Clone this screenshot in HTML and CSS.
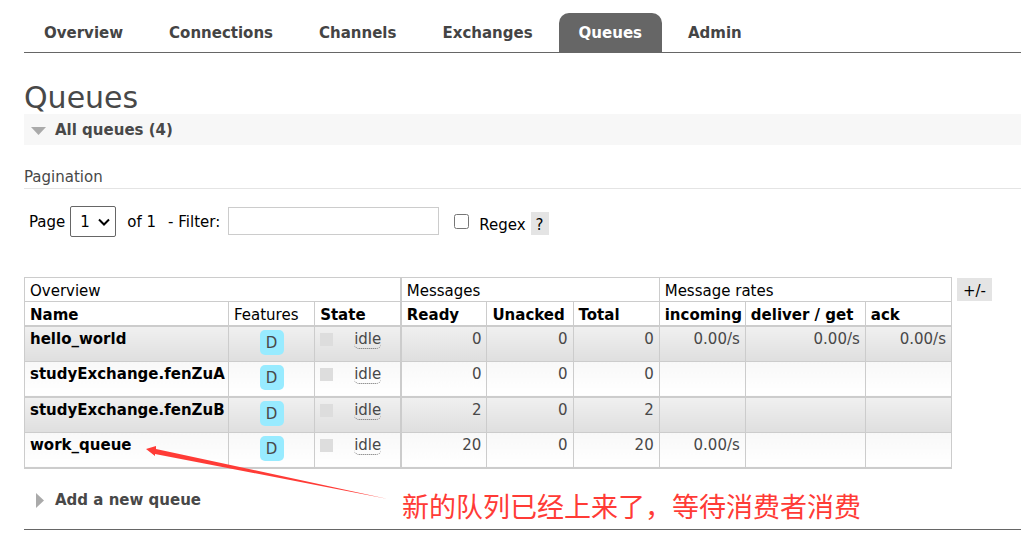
FILE: index.html
```html
<!DOCTYPE html>
<html lang="en">
<head>
<meta charset="utf-8">
<title>Queues</title>
<link rel="stylesheet" href="styles.css">
</head>
<body>
<nav class="tabs">
  <a href="#">Overview</a>
  <a href="#">Connections</a>
  <a href="#">Channels</a>
  <a href="#">Exchanges</a>
  <a href="#" class="selected">Queues</a>
  <a href="#">Admin</a>
</nav>
<main class="main">
  <h1>Queues</h1>
  <h2 class="section open"><svg class="arrow" viewBox="0 0 15 15"><path d="M0 4h15L7.500 12z"/></svg>All queues (4)</h2>
  <h3>Pagination</h3>
  <form class="filter">
    <label for="page">Page</label>
    <span class="select-box">
      <select id="page"><option>1</option></select>
      <svg class="chevron" viewBox="0 0 12 8"><path d="M1 1.500l5 5 5-5"/></svg>
    </span>
    <span class="of">of 1</span>
    <label class="filter-label" for="filter">- Filter:</label>
    <input type="text" id="filter" class="text">
    <input type="checkbox" id="regex" class="check">
    <label class="regex" for="regex">Regex</label>
    <button type="button" class="help">?</button>
  </form>
  <div class="listing">
    <table class="list">
      <colgroup>
        <col class="c-name"><col><col><col><col><col><col><col class="c-get"><col>
      </colgroup>
      <thead>
        <tr><th colspan="3" class="plain divide">Overview</th><th colspan="3" class="plain">Messages</th><th colspan="3" class="plain">Message rates</th></tr>
        <tr><th>Name</th><th class="plain">Features</th><th class="divide">State</th><th>Ready</th><th>Unacked</th><th>Total</th><th>incoming</th><th>deliver / get</th><th>ack</th></tr>
      </thead>
      <tbody>
        <tr><td><a href="#">hello_world</a></td><td class="c"><abbr class="feature">D</abbr></td><td class="divide"><div class="state"><i></i><abbr>idle</abbr></div></td><td class="r">0</td><td class="r">0</td><td class="r">0</td><td class="r">0.00/s</td><td class="r">0.00/s</td><td class="r">0.00/s</td></tr>
        <tr><td><a href="#">studyExchange.fenZuA</a></td><td class="c"><abbr class="feature">D</abbr></td><td class="divide"><div class="state"><i></i><abbr>idle</abbr></div></td><td class="r">0</td><td class="r">0</td><td class="r">0</td><td></td><td></td><td></td></tr>
        <tr><td><a href="#">studyExchange.fenZuB</a></td><td class="c"><abbr class="feature">D</abbr></td><td class="divide"><div class="state"><i></i><abbr>idle</abbr></div></td><td class="r">2</td><td class="r">0</td><td class="r">2</td><td></td><td></td><td></td></tr>
        <tr><td><a href="#">work_queue</a></td><td class="c"><abbr class="feature">D</abbr></td><td class="divide"><div class="state"><i></i><abbr>idle</abbr></div></td><td class="r">20</td><td class="r">0</td><td class="r">20</td><td class="r">0.00/s</td><td></td><td></td></tr>
      </tbody>
    </table>
    <button type="button" class="columns">+/-</button>
  </div>
  <h2 class="section"><svg class="arrow" viewBox="0 0 15 15"><path d="M5 0v15l8-7.500z"/></svg>Add a new queue</h2>
</main>
<svg class="pointer" viewBox="0 0 242 56"><path d="M0 3L10 0 10 3 242 53 9 8 9 10z"/></svg>
<p class="note" lang="zh-CN">新的队列已经上来了，等待消费者消费</p>
</body>
</html>
```
FILE: styles.css
```css
* { box-sizing: border-box; }
body {
  position: relative;
  margin: 0;
  padding: 13px 0 0 24px;
  background: #fff;
  color: #484848;
  font: 15px/20px Verdana, "DejaVu Sans", sans-serif;
  overflow: hidden;
}
button, input, select { font: inherit; }
.tabs {
  display: flex;
  gap: 6px;
  border-bottom: 1px solid #666;
}
.tabs a {
  padding: 10px 20px 9px;
  border-radius: 10px 10px 0 0;
  color: #444;
  font-weight: bold;
  text-decoration: none;
}
.tabs .selected { background: #666; color: #fff; }
.main { border-bottom: 1px solid #666; padding-bottom: 14px; }
h1 {
  margin: 28px 0 0;
  font-size: 30px;
  line-height: 33px;
  font-weight: normal;
}
.section {
  display: flex;
  align-items: center;
  gap: 9px;
  margin: 0;
  padding: 6px 7px 5px;
  font-size: 15px;
  line-height: 20px;
}
.open { background: #f7f7f7; }
.arrow { width: 15px; height: 15px; fill: #aaa; }
h3 {
  margin: 22px 0 17px;
  border-bottom: 1px solid #e4e4e4;
  font-size: 15px;
  line-height: 21px;
  font-weight: normal;
}
.filter {
  display: flex;
  align-items: center;
  padding-left: 5px;
  color: #000;
}
.select-box { position: relative; margin: 0 11px 0 5px; }
.select-box select {
  display: block;
  width: 46px;
  height: 31px;
  padding: 0 9px;
  appearance: none;
  border: 1px solid #666;
  border-radius: 2px;
  background: #fff;
  color: #000;
}
.chevron {
  position: absolute;
  right: 6px;
  top: 12px;
  width: 12px;
  height: 8px;
  fill: none;
  stroke: #000;
  stroke-width: 2;
  pointer-events: none;
}
.of { margin-right: 12px; }
.filter-label { margin-right: 8px; }
.text {
  width: 211px;
  height: 28px;
  margin-bottom: 1px;
  border: 1px solid #ccc;
}
.check { width: 15px; height: 15px; margin: 0 10px 0 15px; }
.regex { padding-top: 6px; }
.help, .columns {
  height: 23px;
  padding: 2px 5px 0;
  border: 0;
  background: #e4e4e4;
  color: #000;
  line-height: 20px;
}
.help { margin: 4px 0 0 5px; }
.listing {
  display: flex;
  align-items: flex-start;
  gap: 5px;
  margin: 40px 0 15px;
}
.list {
  width: 928px;
  table-layout: fixed;
  border-collapse: collapse;
}
.c-name { width: 204px; }
.c-get { width: 120px; }
th, td {
  padding: 2px 5px 1px;
  border: 1px solid #ccc;
  text-align: left;
  vertical-align: top;
  white-space: nowrap;
}
th { padding: 3px 5px 0; color: #000; }
.plain { font-weight: normal; }
.divide { border-right-width: 2px; }
tbody td { height: 35px; }
tbody tr:nth-child(odd) td { border-top-width: 2px; background: linear-gradient(#f0f0f0, #dfdfdf); }
tbody tr:nth-child(even) td { height: 36px; background: linear-gradient(#f8f8f8, #fff); }
tbody tr:last-child td { border-bottom-width: 2px; }
td a { color: #000; font-weight: bold; text-decoration: none; }
.r { text-align: right; }
.c { text-align: center; }
.feature {
  display: inline-block;
  width: 24px;
  height: 25px;
  margin-top: 1px;
  border-radius: 5px;
  background: #98ebff;
  line-height: 26px;
  vertical-align: top;
}
.state { display: flex; }
.state i { width: 13px; height: 13px; margin: 4px 21px 0 0; background: #ddd; }
.state abbr { height: 20px; border-bottom: 1px dotted #666; border-radius: 5px; }
.columns { margin-top: 1px; padding: 2px 6px 0; }
.pointer {
  position: absolute;
  left: 146px;
  top: 446px;
  width: 242px;
  height: 56px;
  fill: #ff3b36;
}
.note {
  position: absolute;
  left: 402px;
  top: 486px;
  margin: 0;
  color: #ff3b36;
  font: 27px/40px "Noto Sans CJK SC", sans-serif;
  white-space: nowrap;
}
```
